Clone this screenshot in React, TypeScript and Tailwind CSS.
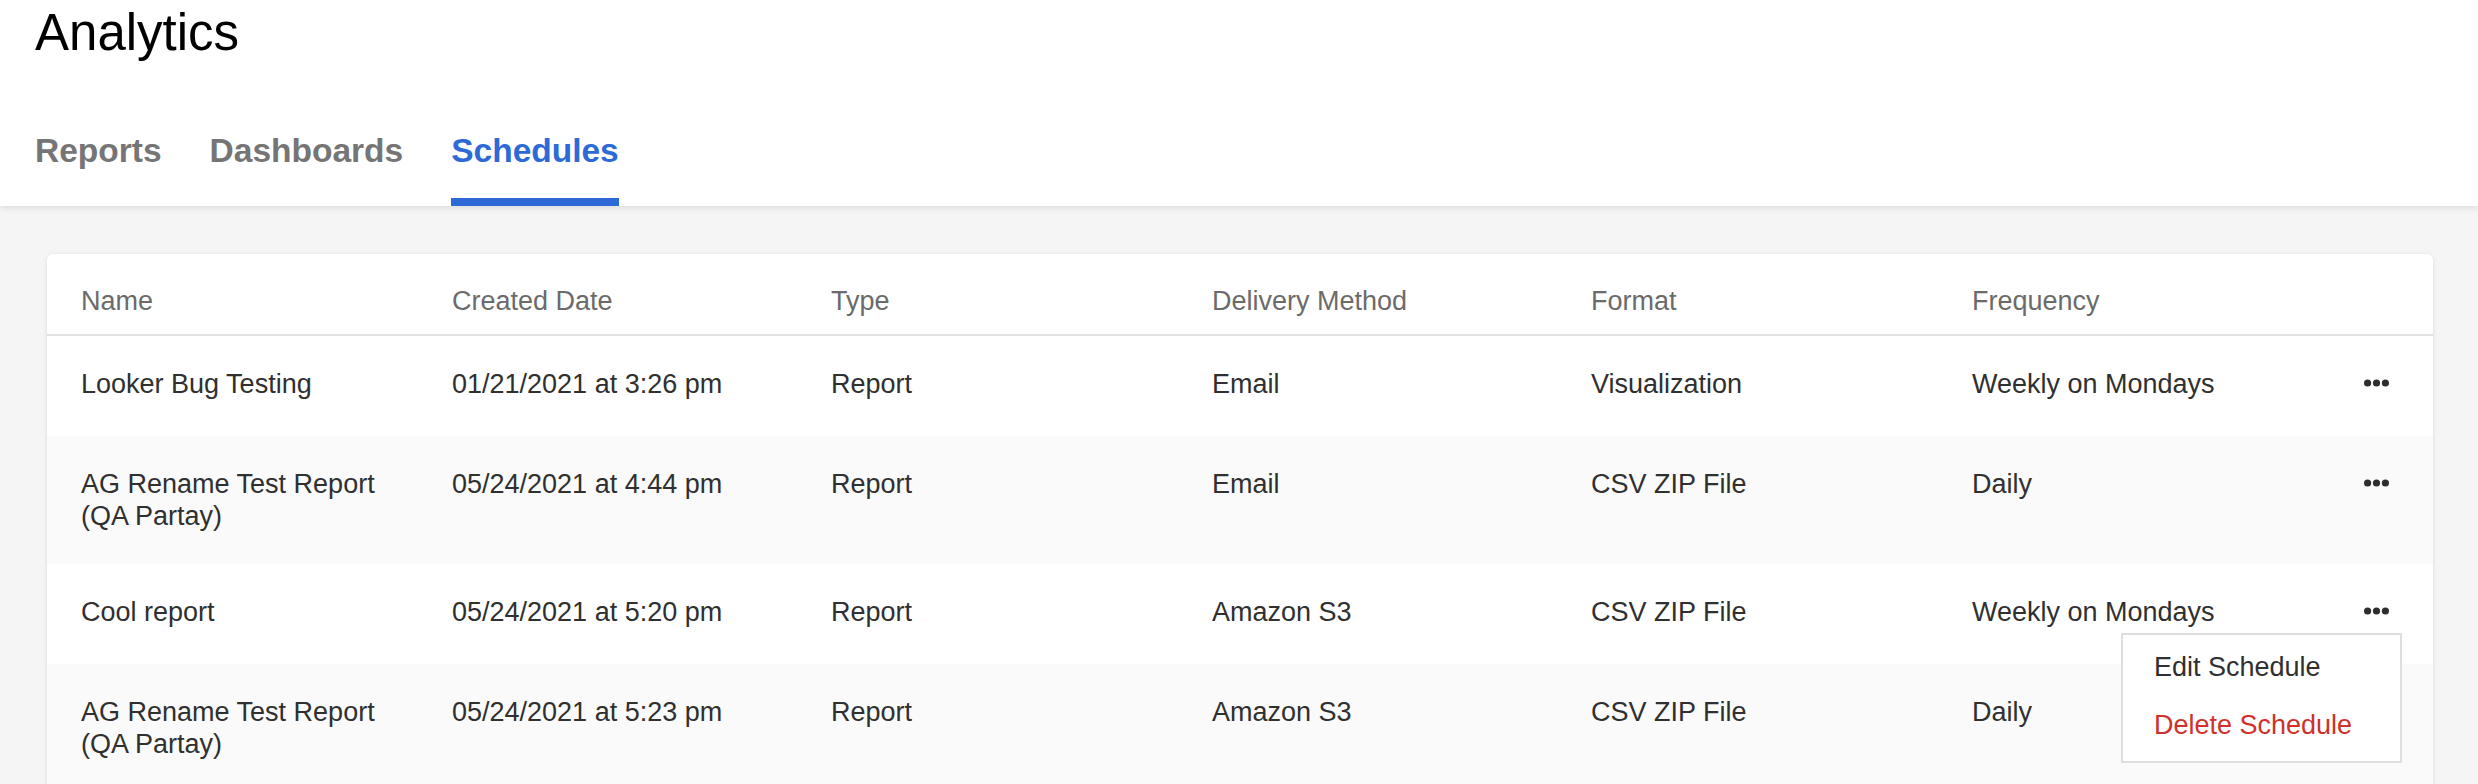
import React from "react";

type Row = {
  name: string;
  date: string;
  type: string;
  delivery: string;
  format: string;
  frequency: string;
  bg: string;
  menu?: boolean;
};

const rows: Row[] = [
  { name: "Looker Bug Testing", date: "01/21/2021 at 3:26 pm", type: "Report", delivery: "Email", format: "Visualization", frequency: "Weekly on Mondays", bg: "bg-white" },
  { name: "AG Rename Test Report (QA Partay)", date: "05/24/2021 at 4:44 pm", type: "Report", delivery: "Email", format: "CSV ZIP File", frequency: "Daily", bg: "bg-[#fafafa]" },
  { name: "Cool report", date: "05/24/2021 at 5:20 pm", type: "Report", delivery: "Amazon S3", format: "CSV ZIP File", frequency: "Weekly on Mondays", bg: "bg-white", menu: true },
  { name: "AG Rename Test Report (QA Partay)", date: "05/24/2021 at 5:23 pm", type: "Report", delivery: "Amazon S3", format: "CSV ZIP File", frequency: "Daily", bg: "bg-[#fafafa]" },
];

function Dots({ show }: { show: boolean }) {
  if (!show) return null;
  return (
    <svg width="25" height="8" viewBox="0 0 25 8" className="block">
      <circle cx="3.6" cy="4" r="3.6" fill="#2e2e2e" />
      <circle cx="12.5" cy="4" r="3.6" fill="#2e2e2e" />
      <circle cx="21.4" cy="4" r="3.6" fill="#2e2e2e" />
    </svg>
  );
}

const grid =
  "grid grid-cols-[371px_379px_381px_379px_381px_1fr_25px] pl-[34px] pr-[44px]";

export default function App() {
  return (
    <div className="min-h-screen bg-[#f5f5f5] font-['Liberation_Sans',Arial,sans-serif]">
      <header className="relative z-10 bg-white pl-[35px] pt-[8px] shadow-[0_2px_6px_rgba(0,0,0,0.10)]">
        <h1 className="text-[51px] leading-[50px] text-black">Analytics</h1>
        <nav className="mt-[76px] flex gap-[48px] text-[33.5px] font-bold leading-[33px]">
          <div className="border-b-[8px] border-transparent pb-[31px] text-[#757575]">Reports</div>
          <div className="border-b-[8px] border-transparent pb-[31px] text-[#757575]">Dashboards</div>
          <div className="border-b-[8px] border-[#2d6ad6] pb-[31px] text-[#2d6ad6]">Schedules</div>
        </nav>
      </header>

      <main className="ml-[47px] mr-[45px] mt-[48px] rounded-[6px] bg-white shadow-[0_1px_4px_rgba(0,0,0,0.12)]">
        <div className={`${grid} border-b-2 border-[#e2e2e2] pt-[31px] pb-[17px] text-[27px] leading-[32px] text-[#6b6b6b]`}>
          <div>Name</div>
          <div>Created Date</div>
          <div>Type</div>
          <div>Delivery Method</div>
          <div>Format</div>
          <div>Frequency</div>
          <div />
        </div>

        {rows.map((r, i) => (
          <div
            key={i}
            className={`${grid} ${r.bg} items-start pt-[32px] pb-[32px] text-[27px] leading-[32px] text-[#303030]`}
          >
            <div className="pr-[60px]">{r.name}</div>
            <div className="pr-[30px]">{r.date}</div>
            <div>{r.type}</div>
            <div>{r.delivery}</div>
            <div>{r.format}</div>
            <div>{r.frequency}</div>
            <div className="relative h-[36px] pt-[11px]">
              <Dots show={!(i === 3)} />
              {r.menu && (
                <div className="absolute right-[-13px] top-[37px] z-20 w-[281px] border-2 border-[#dedede] bg-white pt-[3px] pb-[7px]">
                  <div className="px-[31px] py-[13px] text-[27px] leading-[32px] text-[#303030] whitespace-nowrap">
                    Edit Schedule
                  </div>
                  <div className="px-[31px] py-[13px] text-[27px] leading-[32px] text-[#d0312d] whitespace-nowrap">
                    Delete Schedule
                  </div>
                </div>
              )}
            </div>
          </div>
        ))}
      </main>
    </div>
  );
}
